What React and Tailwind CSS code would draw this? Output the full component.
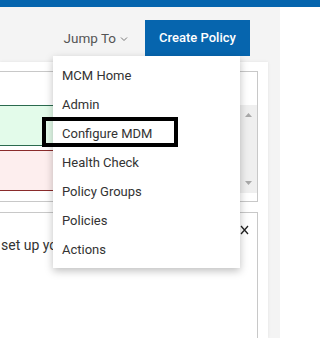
import React from "react";

export default function App() {
  const items = ["MCM Home", "Admin", "Configure MDM", "Health Check", "Policy Groups", "Policies", "Actions"];
  return (
    <div className="relative w-[320px] h-[338px] overflow-hidden bg-white" style={{ fontFamily: "Roboto, 'Liberation Sans', sans-serif" }}>
      <div className="h-[7px] bg-[#0665ae]" />
      <div className="flex h-[331px]">
        <div className="w-[280px] bg-[#f4f4f4] flex flex-col">
          <div className="flex items-center justify-end pr-[30px] pt-[13px] pb-[6px] gap-[17px]">
            <div className="flex items-center gap-[4px] text-[13.5px] text-[#555]">
              <span>Jump To</span>
              <svg width="8" height="6" viewBox="0 0 8 6" className="mt-[1px]">
                <path d="M1 1.5 L4 4.5 L7 1.5" fill="none" stroke="#777" strokeWidth="1" />
              </svg>
            </div>
            <button className="w-[105px] h-[36px] bg-[#0665ae] text-white text-[13px] font-medium">Create Policy</button>
          </div>
          <div className="w-[268px] flex-1 bg-white pt-[9px] pr-[10px] flex flex-col shadow-[0_0_3px_rgba(0,0,0,0.08)]">
            <div className="h-[131px] border border-l-0 border-[#c8c8c8] flex flex-col">
              <div className="h-[33px]" />
              <div className="flex">
                <div className="flex-1 flex flex-col">
                  <div className="h-[41px] border-y border-[#2a6a4e] bg-[#e3fbea]" />
                  <div className="h-[41px] mt-[4px] border-y border-[#8a2b2b] bg-[#fdeeee]" />
                </div>
                <div className="w-[17px] h-[88px] bg-[#efefef] flex flex-col items-center justify-between py-[8px]">
                  <svg width="7" height="4" viewBox="0 0 7 4"><path d="M0 4 L3.5 0 L7 4 Z" fill="#a8a8a8" /></svg>
                  <svg width="7" height="4" viewBox="0 0 7 4"><path d="M0 0 L3.5 4 L7 0 Z" fill="#a8a8a8" /></svg>
                </div>
              </div>
            </div>
            <div className="mt-[10px] flex-1 border border-l-0 border-b-0 border-[#c8c8c8] relative">
              <svg className="absolute left-[240px] top-[12px]" width="9" height="10" viewBox="0 0 9 10">
                <path d="M1 1 L8 9 M8 1 L1 9" stroke="#222" strokeWidth="1.3" fill="none" />
              </svg>
              <div className="pt-[22px] pl-[1px] text-[14px] text-[#333] whitespace-nowrap overflow-hidden">set up your service yet. Let us be your</div>
            </div>
          </div>
        </div>
        <div className="flex-1 bg-white" />
      </div>

      <div className="absolute left-[53px] top-[56px] w-[187px] h-[212px] bg-white pt-[5px] shadow-[0_3px_8px_rgba(0,0,0,0.25)]">
        {items.map((t) => (
          <div key={t} className="h-[29px] flex items-center pl-[9px] text-[13px] text-[#333]">{t}</div>
        ))}
      </div>
      <div className="absolute left-[42px] top-[117px] w-[136px] h-[30px] border-4 border-black" />
    </div>
  );
}
